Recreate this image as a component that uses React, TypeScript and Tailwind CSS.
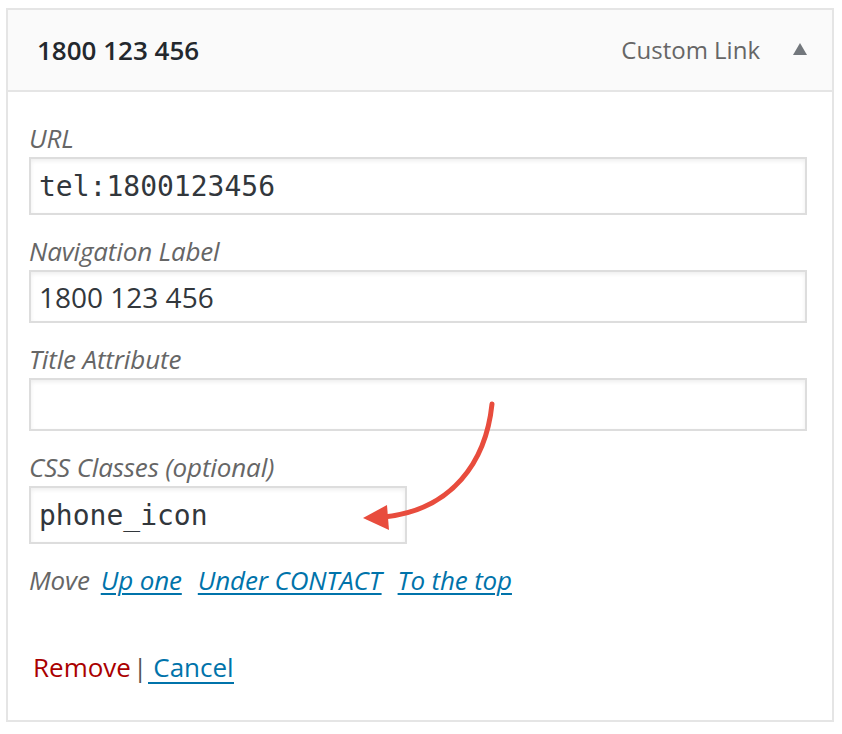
import React from 'react';

const sans = { fontFamily: '"Open Sans", "Noto Sans", sans-serif' };

const Field: React.FC<{ label: string; value?: string; mono?: boolean; narrow?: boolean; first?: boolean }> = ({
    label,
    value = '',
    mono,
    narrow,
    first,
}) => (
    <div className={first ? '' : 'mt-[19px]'}>
        <label className="block h-[34px] text-[26px] leading-[34px] italic text-[#666] tracking-[-0.15px]">{label}</label>
        <input
            readOnly
            defaultValue={value}
            className={`mt-[2px] block border-2 border-[#dddddd] bg-white px-[8px] text-[#32373c] outline-none shadow-[inset_0_2px_4px_rgba(0,0,0,0.07)] ${
                mono ? 'h-[58px] text-[28px] font-["DejaVu_Sans_Mono",monospace]' : 'h-[53px] text-[28px]'
            } ${narrow ? 'w-[378px]' : 'w-[778px]'}`}
        />
    </div>
);

export default function App() {
    return (
        <div className="relative w-[842px] h-[734px] bg-white pt-[8px] pl-[6px]" style={sans}>
            <div className="w-[828px] h-[714px] border-2 border-[#e5e5e5] bg-white">
                {/* Item header */}
                <div className="flex h-[82px] items-center justify-between border-b-2 border-[#e5e5e5] bg-[#fafafa] pl-[29px] pr-[25px]">
                    <span className="text-[26px] font-semibold text-[#23282d]">1800 123 456</span>
                    <div className="flex items-center">
                        <span className="text-[24px] text-[#666]">Custom Link</span>
                        <svg width="14" height="12" viewBox="0 0 14 12" className="ml-[33px] -mt-[2px]">
                            <path d="M7 0 L14 12 L0 12 Z" fill="#72777c" />
                        </svg>
                    </div>
                </div>

                {/* Settings */}
                <div className="pl-[21px] pr-[25px] pt-[29px]">
                    <Field first label="URL" value="tel:1800123456" mono />
                    <Field label="Navigation Label" value="1800 123 456" />
                    <Field label="Title Attribute" />
                    <Field label="CSS Classes (optional)" value="phone_icon" mono narrow />

                    <div className="mt-[19px] h-[34px] text-[26px] leading-[34px] italic text-[#666] whitespace-nowrap tracking-[-0.15px]">
                        Move
                        <a className="ml-[11px] text-[#0073aa] underline decoration-2 underline-offset-[3px]">Up one</a>
                        <a className="ml-[16px] text-[#0073aa] underline decoration-2 underline-offset-[3px]">Under CONTACT</a>
                        <a className="ml-[16px] text-[#0073aa] underline decoration-2 underline-offset-[3px]">To the top</a>
                    </div>

                    <div className="mt-[53px] flex items-baseline pl-[4px] text-[26px] leading-[34px]">
                        <span className="text-[#aa0000]">Remove</span>
                        <span className="ml-[2px] text-[#555]">|</span>
                        <a className="ml-[1px] border-b-2 border-[#0073aa] pl-[5px] leading-[30px] text-[#0073aa]">Cancel</a>
                    </div>
                </div>
            </div>

            {/* Annotation arrow */}
            <svg className="pointer-events-none absolute left-0 top-0" width="842" height="734" viewBox="0 0 842 734">
                <path d="M492 404 C486 462, 452 510, 384 517" fill="none" stroke="#e84c3d" strokeWidth="5" strokeLinecap="round" />
                <path d="M363 518 L387 505 L389 530 Z" fill="#e84c3d" />
            </svg>
        </div>
    );
}
